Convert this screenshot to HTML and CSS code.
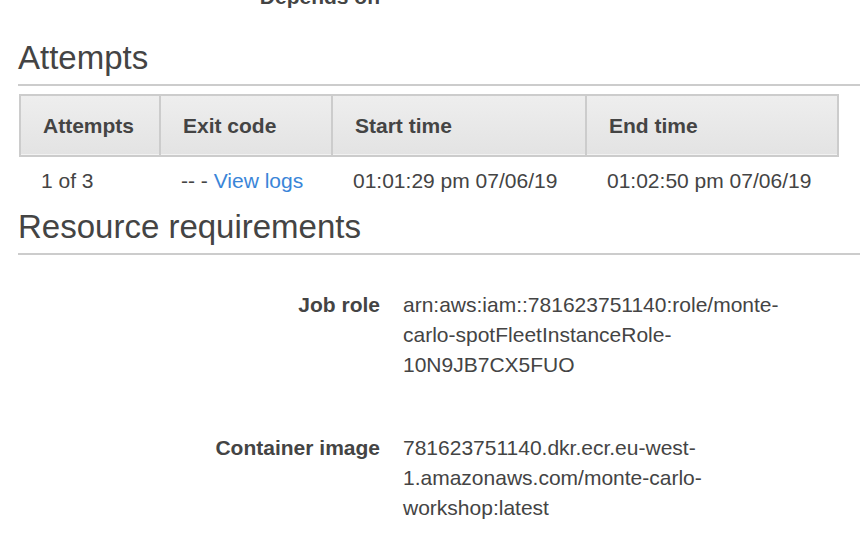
FILE: index.html
```html
<!DOCTYPE html>
<html lang="en">
<head>
<meta charset="utf-8">
<title>Job details</title>
<link rel="stylesheet" href="styles.css">
</head>
<body>
<div class="page">
  <div class="detail detail-top">
    <div class="label">Depends on</div>
    <div class="value"></div>
  </div>

  <h2 class="section-title first">Attempts</h2>
  <table class="attempts">
    <colgroup>
      <col class="c1"><col class="c2"><col class="c3"><col class="c4">
    </colgroup>
    <thead>
      <tr>
        <th>Attempts</th>
        <th>Exit code</th>
        <th>Start time</th>
        <th class="last">End time</th>
      </tr>
    </thead>
    <tbody>
      <tr>
        <td>1 of 3</td>
        <td>-- - <a href="#" class="link">View logs</a></td>
        <td>01:01:29 pm 07/06/19</td>
        <td>01:02:50 pm 07/06/19</td>
      </tr>
    </tbody>
  </table>

  <h2 class="section-title">Resource requirements</h2>
  <div class="details">
    <div class="detail">
      <div class="label">Job role</div>
      <div class="value">arn:aws:iam::781623751140:role/monte-carlo-spotFleetInstanceRole-10N9JB7CX5FUO</div>
    </div>
    <div class="detail">
      <div class="label">Container image</div>
      <div class="value">781623751140.dkr.ecr.eu-west-1.amazonaws.com/monte-carlo-workshop:latest</div>
    </div>
  </div>
</div>
</body>
</html>
```

FILE: styles.css
```css
html, body {
  margin: 0;
  padding: 0;
  background: #ffffff;
}

body {
  font-family: "Liberation Sans", Helvetica, Arial, sans-serif;
  font-size: 21px;
  color: #444444;
  overflow: hidden;
}

.page {
  width: 860px;
}

.detail {
  display: grid;
  grid-template-columns: 380px 420px;
  column-gap: 23px;
  line-height: 30px;
}

.detail .label {
  text-align: right;
  font-weight: bold;
  color: #444444;
}

.detail .value {
  color: #444444;
}

.detail-top {
  margin-top: -18px;
}

.section-title {
  margin: 26px 0 0 18px;
  padding-bottom: 6px;
  font-size: 33px;
  line-height: 40px;
  font-weight: normal;
  color: #444444;
  border-bottom: 2px solid #cccccc;
}

.attempts {
  margin: 8px 0 0 19px;
  width: 820px;
  table-layout: fixed;
  border-collapse: separate;
  border-spacing: 0;
}

.attempts col.c1 { width: 140px; }
.attempts col.c2 { width: 172px; }
.attempts col.c3 { width: 254px; }
.attempts col.c4 { width: 254px; }

.attempts th {
  height: 59px;
  padding: 0 0 0 22px;
  text-align: left;
  font-weight: bold;
  font-size: 21px;
  color: #444444;
  background: linear-gradient(#eeeeee, #e3e3e3);
  box-shadow: inset 0 -1px 0 #f2f2f2;
  border-top: 2px solid #cccccc;
  border-bottom: 2px solid #cccccc;
  border-left: 2px solid #cccccc;
}

.attempts th.last {
  border-right: 2px solid #cccccc;
}

.attempts td {
  padding: 12px 0 14px 22px;
  line-height: 24px;
  white-space: nowrap;
}

.link {
  color: #3a85d8;
  text-decoration: none;
}

.section-title + .details {
  margin-top: 35px;
}

.details .detail + .detail {
  margin-top: 53px;
}

.attempts + .section-title {
  margin-top: 0;
}
```
